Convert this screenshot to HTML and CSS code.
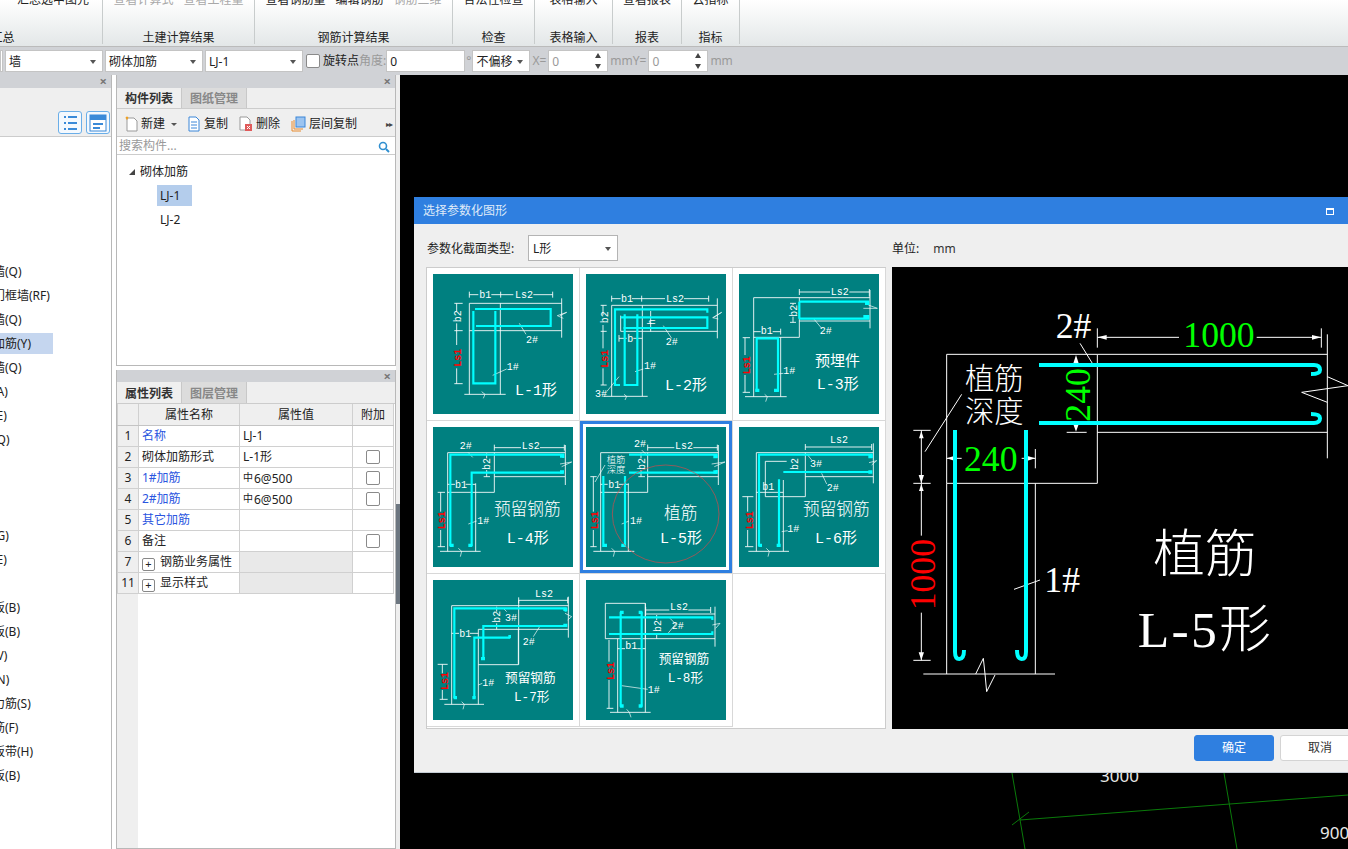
FILE: index.html
```html
<!DOCTYPE html>
<html lang="zh">
<head>
<meta charset="utf-8">
<title>选择参数化图形</title>
<link rel="stylesheet" href="styles.css">
</head>
<body>
<header class="ribbon">
  <div class="rgroup g1"><div class="rbtns"><span class="rb">算</span><span class="rb fill">汇总选中图元</span></div><div class="rlabel">汇总</div></div>
  <div class="rgroup g2"><div class="rbtns"><span class="rb off">查看计算式</span><span class="rb off">查看工程量</span></div><div class="rlabel">土建计算结果</div></div>
  <div class="rgroup g3"><div class="rbtns"><span class="rb">查看钢筋量</span><span class="rb">编辑钢筋</span><span class="rb off">钢筋三维</span></div><div class="rlabel">钢筋计算结果</div></div>
  <div class="rgroup g4"><div class="rbtns"><span class="rb">合法性检查</span></div><div class="rlabel">检查</div></div>
  <div class="rgroup g5"><div class="rbtns"><span class="rb">表格输入</span></div><div class="rlabel">表格输入</div></div>
  <div class="rgroup g6"><div class="rbtns"><span class="rb">查看报表</span></div><div class="rlabel">报表</div></div>
  <div class="rgroup g7"><div class="rbtns"><span class="rb">云指标</span></div><div class="rlabel">指标</div></div>
</header>

<div class="optbar">
  <div class="combo w-stub"></div>
  <div class="combo w-98"><span>墙</span><i class="caret"></i></div>
  <div class="combo w-98"><span>砌体加筋</span><i class="caret"></i></div>
  <div class="combo w-98"><span>LJ-1</span><i class="caret"></i></div>
  <span class="check opt-check"></span>
  <span class="opt-t">旋转点</span>
  <span class="opt-t dim ang">角度:</span>
  <div class="combo w-80"><span>0</span></div>
  <span class="opt-t dim deg">°</span>
  <div class="combo w-58"><span>不偏移</span><i class="caret"></i></div>
  <span class="opt-t dim">X=</span>
  <div class="combo w-60"><span class="dim">0</span><i class="spin"></i></div>
  <span class="opt-t dim">mmY=</span>
  <div class="combo w-60"><span class="dim">0</span><i class="spin"></i></div>
  <span class="opt-t dim">mm</span>
</div>

<main class="workspace">
  <aside class="navpanel">
    <div class="phead"><span class="px">×</span></div>
    <div class="navtabs"></div>
    <div class="navtools">
      <span class="vbtn"><svg viewBox="0 0 24 22" width="24" height="22"><rect x="6" y="4" width="2" height="2" class="ic-b"/><rect x="10" y="4" width="9" height="2" class="ic-b"/><rect x="6" y="10" width="2" height="2" class="ic-b"/><rect x="10" y="10" width="9" height="2" class="ic-b"/><rect x="6" y="16" width="2" height="2" class="ic-b"/><rect x="10" y="16" width="9" height="2" class="ic-b"/></svg></span>
      <span class="vbtn"><svg viewBox="0 0 24 22" width="24" height="22"><rect x="4" y="3" width="16" height="16" class="ic-o"/><rect x="4" y="3" width="16" height="5" class="ic-b"/><rect x="7" y="11" width="10" height="2" class="ic-b"/><rect x="7" y="15" width="7" height="2" class="ic-b"/></svg></span>
    </div>
    <ul class="navlist">
      <li class="sp8"></li>
      <li>剪力墙(Q)</li><li>人防门框墙(RF)</li><li>砌体墙(Q)</li><li class="sel">砌体加筋(Y)</li><li>保温墙(Q)</li><li>暗梁(A)</li><li>墙垛(E)</li><li>幕墙(Q)</li>
      <li></li><li></li><li></li>
      <li>连梁(G)</li><li>圈梁(E)</li>
      <li></li>
      <li>现浇板(B)</li><li>螺旋板(B)</li><li>柱帽(V)</li><li>板洞(N)</li><li>板受力筋(S)</li><li>板负筋(F)</li><li>楼层板带(H)</li><li>后浇板(B)</li>
    </ul>
  </aside>

  <div class="midcol">
    <section class="panel top">
      <div class="phead"><span class="px">×</span></div>
      <div class="tabs"><span class="tab on">构件列表</span><span class="tab">图纸管理</span></div>
      <div class="tools">
        <svg class="tic t1" viewBox="0 0 14 16" width="14" height="16"><path d="M3 2h7l3 3v10H3z" fill="#fff" stroke="#999"/><path d="M2 1l2 2M4 1L2 3" stroke="#f0a020" stroke-width="1.5"/></svg><span>新建</span><i class="mini"></i>
        <svg class="tic t2" viewBox="0 0 14 16" width="14" height="16"><path d="M2 1h7l3 3v11H2z" fill="#fff" stroke="#3a86d8"/><path d="M4 6h6M4 9h6M4 12h6" stroke="#3a86d8"/></svg><span>复制</span>
        <svg class="tic t3" viewBox="0 0 14 16" width="14" height="16"><path d="M1 1h7l3 3v10H1z" fill="#fff" stroke="#999"/><rect x="6" y="8" width="7" height="7" fill="#e05a5a"/><path d="M8 10l3 3M11 10l-3 3" stroke="#fff"/></svg><span>删除</span>
        <svg class="tic t4" viewBox="0 0 15 16" width="15" height="16"><path d="M1 5v10h9M3 4v9h9" fill="none" stroke="#e88b2e"/><rect x="5" y="1" width="9" height="10" fill="#9cc4f0" stroke="#3a86d8"/></svg><span>层间复制</span>
        <span class="more">▸▸</span>
      </div>
      <div class="search"><span>搜索构件...</span><svg viewBox="0 0 12 12" width="12" height="12"><circle cx="5" cy="5" r="3.5" fill="none" stroke="#2f8fd0" stroke-width="1.6"/><path d="M8 8l3 3" stroke="#2f8fd0" stroke-width="2"/></svg></div>
      <div class="tree">
        <div class="troot"><i class="tri"></i>砌体加筋</div>
        <div class="tleaf sel">LJ-1</div>
        <div class="tleaf">LJ-2</div>
      </div>
    </section>
    <section class="panel bottom">
      <div class="phead short"><span class="px">×</span></div>
      <div class="tabs t2row"><span class="tab on">属性列表</span><span class="tab">图层管理</span></div>
      <table class="props">
        <thead><tr><th class="c0"></th><th class="c1">属性名称</th><th class="c2">属性值</th><th class="c3">附加</th></tr></thead>
        <tbody>
          <tr><th>1</th><td class="blue">名称</td><td>LJ-1</td><td></td></tr>
          <tr><th>2</th><td>砌体加筋形式</td><td>L-1形</td><td class="mid"><span class="check"></span></td></tr>
          <tr><th>3</th><td class="blue">1#加筋</td><td><span class="rebar">中</span>6@500</td><td class="mid"><span class="check"></span></td></tr>
          <tr><th>4</th><td class="blue">2#加筋</td><td><span class="rebar">中</span>6@500</td><td class="mid"><span class="check"></span></td></tr>
          <tr><th>5</th><td class="blue">其它加筋</td><td></td><td></td></tr>
          <tr><th>6</th><td>备注</td><td></td><td class="mid"><span class="check"></span></td></tr>
          <tr><th>7</th><td><span class="plus">+</span>钢筋业务属性</td><td class="gray"></td><td></td></tr>
          <tr><th>11</th><td><span class="plus">+</span>显示样式</td><td class="gray"></td><td></td></tr>
        </tbody>
      </table>
    </section>
  </div>
  <div class="splitter"><span class="handle"></span></div>

  <div class="canvas">
    <svg class="cad" viewBox="0 0 948 774" width="948" height="774">
      <path d="M612 698L625 774M824 698L837 774M620 745L948 720M612 750L629 737" class="grid"/>
      <text x="700" y="707" class="cadtxt">3000</text>
      <text x="920" y="764" class="cadtxt">900</text>
    </svg>
  </div>
</main>

<section class="dialog">
  <div class="dtitle"><span>选择参数化图形</span><span class="maxi"></span></div>
  <div class="dbody">
    <div class="dleft">
      <div class="typerow"><span class="typelabel">参数化截面类型:</span><div class="combo dcombo"><span>L形</span><i class="caret"></i></div></div>
      <div class="gallery">
        <div class="cell"><svg class="tile" viewBox="39 237 420 420">
          <path class="w" d="M148 299H175M214 299H280M340 299H398M148 290V308M242 290V308M398 290V308M148 325H425M148 325V598M241 325V598M148 407H425M425 310V428M133 598H257M110 325V350M110 385V450M110 520V566M103 325H128M103 407H128M103 566H128"/>
          <path class="w t" d="M185 590L195 598L190 610M420 362L440 352L412 362L430 370M298 385L318 418M218 541L260 522"/>
          <path class="c" d="M165 342H392V393H168M226 348V565H160V348"/>
          <text x="178" y="308" class="n">b1</text><text x="285" y="308" class="n">Ls2</text>
          <text class="n" transform="translate(122 382) rotate(-90)">b2</text>
          <text class="n red" transform="translate(124 515) rotate(-90)">Ls1</text>
          <text x="318" y="443" class="n">2#</text><text x="260" y="525" class="n">1#</text>
          <text x="285" y="600" class="big">L-1形</text>
        </svg></div>
        <div class="cell"><svg class="tile" viewBox="498 237 420 420">
          <path class="w" d="M575 311H602M636 311H735M792 311H866M575 302V320M665 302V320M866 302V320M575 331H892M575 331V604M667 331V604M602 409H892M602 362V409M892 310V430M550 604H683M549 331V360M549 390V460M549 520V570M542 331H560M542 409H560M542 570H560M597 430H620M640 430H667M597 420V440M692 348V410"/>
          <path class="w t" d="M612 598L620 604L615 615M880 368L905 352L878 368L895 372M730 392L755 430M645 530L670 522M560 590L597 545"/>
          <path class="c" d="M600 570H585V343H862V353M602 367H862V399H610M614 358V570H652V358"/>
          <text x="603" y="320" class="n">b1</text><text x="738" y="320" class="n">Ls2</text><text x="622" y="440" class="n">b</text>
          <text class="n" transform="translate(564 385) rotate(-90)">b2</text><text class="n" transform="translate(706 390) rotate(-90)">h</text>
          <text class="n red" transform="translate(564 518) rotate(-90)">Ls1</text>
          <text x="737" y="451" class="n">2#</text><text x="672" y="523" class="n">1#</text><text x="525" y="607" class="n">3#</text>
          <text x="735" y="585" class="big">L-2形</text>
        </svg></div>
        <div class="cell"><svg class="tile" viewBox="957 237 420 420">
          <path class="w" d="M1138 291H1230M1288 291H1348M1138 282V300M1348 282V305M1001 308H1350M1001 308V605M1138 308V427H1001M1138 378H1350M1350 285V400M1082 427V605M975 605H1100M1001 410H1022M1058 410H1082M1082 401V419M1119 325V330M1119 365V382M1110 325H1128M1110 382H1128M975 428V480M975 540V592M968 428H990M968 592H990"/>
          <path class="w t" d="M1034 598L1042 605L1037 620M1330 340L1372 340L1345 330M1180 370L1205 400M1062 538L1090 535"/>
          <path class="c" d="M1138 320H1345V330M1138 371H1345V360M1138 320V371M1010 590V430H1074V590"/>
          <path class="cb" d="M1006 586H1018M1062 586H1076M1335 325H1346M1330 365H1346"/>
          <text x="1022" y="418" class="n">b1</text><text x="1232" y="300" class="n">Ls2</text>
          <text class="n" transform="translate(1130 365) rotate(-90)">b2</text>
          <text class="n red" transform="translate(990 538) rotate(-90)">Ls1</text>
          <text x="1199" y="418" class="n">2#</text><text x="1090" y="538" class="n">1#</text>
          <text x="1185" y="512" class="big">预埋件</text><text x="1190" y="582" class="big">L-3形</text>
        </svg></div>
        <div class="cell"><svg class="tile" viewBox="24 21 420 420">
          <path class="w" d="M208 83H288M345 83H418M208 74V92M418 74V92M68 98H420M68 98V394M208 98V217H68M208 170H420M152 190V394M421 75V195M45 394H167M47 217V275M47 330V380M38 217H60M38 380H60M68 193H90M122 193H152M185 100V115M185 150V170M176 170H195"/>
          <path class="w t" d="M100 385L110 394L106 410M405 132L440 126L410 140M130 312L155 303M130 98L143 112"/>
          <path class="c" d="M76 378V104H415V114M140 378V158H415"/>
          <path class="cb" d="M74 376H86M130 376H142M405 108H417M405 156H417"/>
          <text x="104" y="88" class="n">2#</text><text x="290" y="88" class="n">Ls2</text><text x="90" y="203" class="n">b1</text>
          <text class="n" transform="translate(196 150) rotate(-90)">b2</text>
          <text class="n red" transform="translate(60 328) rotate(-90)">Ls1</text>
          <text x="157" y="312" class="n">1#</text>
          <text x="207" y="285" class="big cn">预留钢筋</text><text x="245" y="368" class="big">L-4形</text>
        </svg></div>
        <div class="cell chosen"><svg class="tile" viewBox="483 21 420 420">
          <path class="w" d="M668 83H748M805 83H877M668 74V92M877 74V92M527 98H880M527 98V394M668 98V217H527M668 170H880M610 190V394M880 75V195M505 394H628M505 170V275M505 330V380M496 170H515M496 380H515M527 193H548M582 193H610M648 100V115M648 150V170M640 170H660"/>
          <path class="w t" d="M560 385L569 394L565 410M860 132L900 126L868 140M590 312L612 303M650 90L668 108M540 135L510 186"/>
          <path class="c" d="M612 104H875V114M612 158H875V150M535 168V378H545M600 168V378H590"/>
          <path class="cb" d="M535 376H546M589 376H600M865 110H877M865 156H877"/>
          <ellipse cx="722" cy="282" rx="160" ry="147" class="ring"/>
          <text x="627" y="82" class="n">2#</text><text x="750" y="88" class="n">Ls2</text><text x="550" y="203" class="n">b1</text>
          <text class="n" transform="translate(660 150) rotate(-90)">b2</text>
          <text class="n red" transform="translate(519 328) rotate(-90)">Ls1</text>
          <text x="615" y="312" class="n">1#</text>
          <text x="545" y="130" class="sm">植筋</text><text x="545" y="160" class="sm">深度</text>
          <text x="717" y="297" class="big cn">植筋</text><text x="705" y="368" class="big">L-5形</text>
        </svg></div>
        <div class="cell"><svg class="tile" viewBox="942 21 420 420">
          <path class="w" d="M1141 81H1340M1141 72V90M1340 72V90M994 98H1345M994 98V394M1141 98V230H1021V124H1085M1141 170H1345M994 217H1075M1075 180V394M1345 70V190M970 394H1092M968 230V275M968 330V380M952 230H985M960 380H985"/>
          <path class="w t" d="M1024 385L1033 394L1029 410M1332 128L1355 122L1340 135M1148 105L1160 120M1190 160L1205 192M1070 335L1088 332"/>
          <path class="c" d="M1002 378V104H1340V114M1075 156H1340M1062 178V378"/>
          <path class="cb" d="M1000 376H1011M1055 376H1067M1330 110H1342M1330 156H1342"/>
          <text x="1215" y="70" class="n">Ls2</text><text x="1012" y="209" class="n">b1</text>
          <text class="n" transform="translate(1118 150) rotate(-90)">b2</text>
          <text class="n red" transform="translate(984 328) rotate(-90)">Ls1</text>
          <text x="1155" y="141" class="n">3#</text><text x="1205" y="214" class="n">2#</text><text x="1087" y="337" class="n">1#</text>
          <text x="1134" y="285" class="big cn">预留钢筋</text><text x="1170" y="368" class="big">L-6形</text>
        </svg></div>
        <div class="cell"><svg class="tile" viewBox="24 480 420 420">
          <path class="w" d="M281 541H428M281 532V550M428 532V550M80 557H430M80 557V853M430 530V653M160 628H280V734H160M160 628V853M281 541V734M280 628H430M58 853H177M52 733V760M52 810V838M38 733H68M44 838H68M80 640H102M135 640H160M215 560V575M215 610V628"/>
          <path class="w t" d="M110 845L118 853L114 868M420 580L440 590L428 600M160 795L172 790M235 565L245 575M345 618L325 650"/>
          <path class="c" d="M88 835V565H422V575M175 718V618H425M148 835V653H255"/>
          <path class="cb" d="M86 833H96M142 833H152M415 568H427M415 616H427M168 716H180M250 650H258"/>
          <text x="330" y="532" class="n">Ls2</text><text x="103" y="650" class="n">b1</text>
          <text class="n" transform="translate(224 608) rotate(-90)">b2</text>
          <text class="n red" transform="translate(70 810) rotate(-90)">Ls1</text>
          <text x="240" y="602" class="n">3#</text><text x="293" y="674" class="n">2#</text><text x="172" y="797" class="n">1#</text>
          <text x="240" y="785" class="mid-t">预留钢筋</text><text x="267" y="843" class="mid-t">L-7形</text>
        </svg></div>
        <div class="cell"><svg class="tile" viewBox="483 480 420 420">
          <path class="w" d="M662 570H733M790 570H857M662 561V579M857 561V579M541 550H661V656H541ZM662 582H870M661 656H870M870 560V680M578 656V877M661 550V877M555 877H677M552 660V725M552 780V865M545 865H565M578 686H600M637 686H661M695 585V600M695 640V656"/>
          <path class="w t" d="M605 868L613 877L618 892M862 615L885 610L872 625M590 797L668 808M735 595L752 612L725 645"/>
          <path class="c" d="M552 592H862V600M552 642H862V634M587 575V860M650 575V860"/>
          <path class="cb" d="M585 577H596M652 577H641M585 858H596M652 858H641"/>
          <text x="735" y="570" class="n">Ls2</text><text x="601" y="686" class="n">b1</text>
          <text class="n" transform="translate(708 636) rotate(-90)">b2</text>
          <text class="n red" transform="translate(568 780) rotate(-90)">Ls1</text>
          <text x="740" y="626" class="n">2#</text><text x="668" y="820" class="n">1#</text>
          <text x="701" y="728" class="mid-t">预留钢筋</text><text x="728" y="785" class="mid-t">L-8形</text>
        </svg></div>
        <div class="cell blank"></div>
      </div>
    </div>
    <div class="dright">
      <div class="unitrow"><span>单位:</span><span class="unit">mm</span></div>
      <div class="preview"><svg class="pv" viewBox="6 216 1368 1386" width="456" height="462">
        <path class="pw" d="M170 478H622V865H170ZM622 478H1312M622 712H1312M1312 418V790M622 400V458M1294 400V458M622 427H867M1100 427H1294M530 712H590M94 706V865M70 706H122M70 865H122M94 865V1022M94 1253V1396M70 1396H122M170 865V1437M436 865V1437M100 1437H495M170 790H215M395 790H436M436 762V820"/>
        <path class="pw" d="M1312 545L1374 572L1235 592L1312 622M570 445L607 505M215 598L105 770M257 1437L280 1390L285 1437L290 1490L315 1440M372 1183L450 1155"/>
        <path class="pa" d="M558 480L550 505H566ZM558 710L550 688H566ZM622 427L650 420V434ZM1294 427L1266 420V434ZM170 790L195 782V798ZM436 790L410 782V798ZM94 708L87 730H101ZM94 865L86 840H102ZM94 867L87 888H101ZM94 1396L86 1372H102Z"/>
        <path class="pc" d="M447 510H1272Q1290 510 1290 525Q1290 537 1263 537M447 684H1272Q1290 684 1290 670Q1290 657 1263 657M195 705V1370Q195 1392 208 1392Q222 1392 222 1365M408 705V1370Q408 1392 395 1392Q381 1392 381 1365"/>
        <text x="880" y="456" class="pn green">1000</text>
        <text x="497" y="428" class="pn">2#</text>
        <text x="222" y="829" class="pn green">240</text>
        <text class="pn green" transform="translate(600 680) rotate(-90)">240</text>
        <text class="pn red" transform="translate(134 1246) rotate(-90)">1000</text>
        <text x="463" y="1190" class="pn">1#</text>
        <text x="225" y="582" class="pcn">植筋</text><text x="225" y="682" class="pcn">深度</text>
        <text x="790" y="1130" class="pbig">植筋</text>
        <text x="743" y="1355" class="pbig wide">L-5形</text>
      </svg></div>
    </div>
  </div>
  <div class="dfoot"><button class="btn primary">确定</button><button class="btn">取消</button></div>
</section>
</body>
</html>
```
FILE: styles.css
```css
* { box-sizing: border-box; }
html, body { margin: 0; height: 100%; overflow: hidden; }
body { width: 1348px; height: 849px; position: relative; background: #fff; color: #222;
  font: 12px/1.2 "Noto Sans", "Noto Sans CJK SC", sans-serif; }

/* ribbon */
.ribbon { display: flex; height: 47px; background: linear-gradient(#fff, #e3e7e8); border-bottom: 1px solid #bbb; }
.rgroup { flex: none; height: 44px; border-right: 1px solid #c8cccc; overflow: hidden; }
.g1 { width: 200px; margin-left: -97px; }
.g2 { width: 152px; }
.g3 { width: 198px; }
.g4 { width: 82px; }
.g5 { width: 78px; }
.g6 { width: 69px; }
.g7 { width: 58px; }
.rbtns { display: flex; justify-content: center; gap: 10px; height: 8px; align-items: flex-end; white-space: nowrap; line-height: 16px; }
.rb { flex: none; height: 16px; }
.rb.off { color: #a9a9a9; }
.g1 .rbtns { justify-content: flex-end; padding-right: 13px; }
.rb.fill { margin-left: 10px; }
.rlabel { margin-top: 22px; text-align: center; line-height: 15px; }

/* options bar */
.optbar { display: flex; align-items: center; gap: 2px; height: 28px; background: #d0d2d6; padding: 3px 0; white-space: nowrap; }
.combo { position: relative; flex: none; height: 22px; background: #fff; border: 1px solid #c4c4c4; padding: 0 3px; line-height: 21px; }
.w-stub { width: 3px; padding: 0; }
.w-98 { width: 98px; }
.w-80 { width: 79px; }
.w-58 { width: 58px; }
.w-60 { width: 60px; }
.caret { position: absolute; right: 6px; top: 9px; border: 3px solid transparent; border-top: 4px solid #555; border-bottom: 0; }
.spin { position: absolute; right: 5px; top: 2px; width: 7px; height: 16px; }
.spin::before, .spin::after { content: ""; position: absolute; left: 0; border: 3.5px solid transparent; }
.spin::before { top: 0; border-top: 0; border-bottom: 5px solid #444; }
.spin::after { bottom: 0; border-bottom: 0; border-top: 5px solid #444; }
.check { display: inline-block; width: 14px; height: 14px; background: #fff; border: 1px solid #8a8a8a; border-radius: 2px; }
.opt-check { margin: 0 1px; }
.opt-t { flex: none; padding-top: 1px; }
.dim { color: #9a9a9a; }
.ang { margin: 0 -2px; }
.deg { margin: 0 -1px 0 -1px; }

/* workspace */
.workspace { display: flex; height: 774px; }
.navpanel { flex: none; width: 112px; margin-right: 4px; border-right: 1px solid #b8b8b8; overflow: hidden; background: #fff; }
.phead { position: relative; height: 13px; background: #d0d2d6; }
.phead.short { height: 12px; }
.px { position: absolute; right: 4px; top: -1px; font-size: 13px; line-height: 14px; color: #777; font-weight: 700; }
.navtabs { height: 20px; background: #efefef; }
.navtools { display: flex; justify-content: flex-end; gap: 4px; height: 29px; padding: 3px 1px 0 0; background: #efefef; border-bottom: 1px solid #ccc; }
.vbtn { width: 24px; height: 23px; border: 1px solid #6aaee8; border-radius: 3px; background: #f4f9fe; display: flex; align-items: center; justify-content: center; overflow: hidden; }
.vbtn svg { flex: none; }
.ic-b { fill: #3a8ad8; }
.ic-o { fill: #fff; stroke: #3a8ad8; }
.navlist { margin: 0; padding: 0; list-style: none; }
.navlist li { height: 24px; line-height: 24px; white-space: nowrap; text-indent: -31px; }
.navlist li.sp8 { height: 123px; }
.navlist li.sel { background: #c5d6ef; width: 53px; height: 21px; line-height: 22px; margin: 1px 0 2px; }

.midcol { flex: none; width: 280px; display: flex; flex-direction: column; gap: 4px; }
.panel { border: 1px solid #b8b8b8; border-top: 0; background: #fff; overflow: hidden; }
.panel.top { height: 291px; }
.panel.bottom { flex: 1; background: linear-gradient(90deg, #efefef 21px, #fff 21px); }
.tabs { display: flex; height: 21px; background: #efefef; border-bottom: 1px solid #ccc; }
.t2row { height: 22px; }
.tab { width: 65px; line-height: 22px; text-align: center; background: #dcdcdc; color: #888; font-weight: 700; border-right: 1px solid #c8c8c8; }
.t2row .tab { line-height: 24px; }
.tab.on { background: #efefef; color: #333; }
.tools { display: flex; align-items: center; height: 28px; background: #efefef; border-bottom: 1px solid #ccc; padding: 3px 0 0 7px; white-space: nowrap; }
.tic { flex: none; margin-right: 3px; }
.t2 { margin-left: 10px; }
.t3 { margin-left: 11px; }
.t4 { margin-left: 11px; }
.mini { border: 3px solid transparent; border-top: 3px solid #555; border-bottom: 0; margin-left: 6px; }
.more { margin-left: auto; margin-right: 3px; font-size: 8px; color: #444; letter-spacing: -1px; }
.search { display: flex; align-items: center; justify-content: space-between; height: 18px; padding: 2px 5px 0 2px; border-bottom: 1px solid #ccc; color: #999; }
.tree { padding-top: 8px; }
.troot { height: 17px; line-height: 17px; padding-left: 23px; position: relative; }
.tri { position: absolute; left: 12px; top: 6px; border-left: 6px solid transparent; border-bottom: 6px solid #444; }
.tleaf { width: 35px; margin: 0 0 3px 40px; height: 21px; line-height: 21px; padding-left: 3px; }
.tleaf.sel { background: #b4cdec; margin-top: 5px; }

.props { width: 276px; border-collapse: collapse; table-layout: fixed; }
.props th, .props td { height: 21px; padding: 2px 3px 0; border: 1px solid #d0d0d0; border-top: 0; font-weight: 400; white-space: nowrap; overflow: hidden; }
.props thead th { background: #efefef; border-bottom: 1px solid #c4c4c4; text-align: center; }
.props tbody th { background: #efefef; text-align: center; }
.c0 { width: 21px; }
.c1 { width: 101px; }
.c2 { width: 113px; }
.c3 { width: 41px; }
.props .blue { color: #2a55e0; }
.props .gray { background: #e9e9e9; }
.props .mid { text-align: center; padding: 0; line-height: 0; }
.rebar { font-size: 10px; vertical-align: 2px; margin-right: 1px; }
.plus { display: inline-block; width: 13px; height: 13px; margin: 0 5px 0 0; border: 1px solid #888; border-radius: 2px; font-size: 11px; line-height: 10px; text-align: center; vertical-align: -2px; }

.splitter { flex: none; width: 4px; background: #eee; padding-top: 429px; }
.handle { display: block; height: 100px; background: #6c7680; }
.canvas { flex: 1; background: #000; position: relative; overflow: hidden; }
.cad { display: block; }
.grid { stroke: #0a7a0a; stroke-width: 1; fill: none; }
.cadtxt { fill: #e8e8e8; font: 17px "Noto Sans", sans-serif; }

/* dialog */
.dialog { position: absolute; left: 414px; top: 197px; width: 958px; height: 576px; background: #efefef; border-bottom: 1px solid #c4ccd4; }
.dtitle { display: flex; align-items: center; justify-content: space-between; height: 27px; padding: 1px 38px 0 9px; background: #2f7fe0; color: #dfeaf8; }
.maxi { width: 8px; height: 7px; border: 1px solid #fff; border-top-width: 2px; }
.dbody { display: flex; gap: 6px; padding: 11px 12px 0; }
.dleft { flex: none; width: 460px; }
.typerow { display: flex; align-items: center; height: 26px; margin-bottom: 6px; }
.typelabel { flex: none; width: 102px; padding: 2px 0 0 1px; }
.dcombo { width: 90px; height: 26px; line-height: 25px; padding-left: 4px; border-color: #b4b4b4; }
.dcombo .caret { top: 11px; }
.gallery { display: grid; grid-template-columns: repeat(3, 153px); grid-auto-rows: 153px; align-content: start; height: 462px; background: #fff; border: 1px solid #ccc; }
.cell { padding: 6px; border-right: 1px solid #d8d8d8; border-bottom: 1px solid #d8d8d8; }
.cell.chosen { box-shadow: inset 0 0 0 3px #2f7fe0; }
.cell.blank { border: 0; }
.tile { display: block; width: 140px; height: 140px; background: #008080; }
.w { fill: none; stroke: #fff; stroke-width: 2.6; }
.w.t { stroke-width: 2; }
.c { fill: none; stroke: #00ffff; stroke-width: 6.5; }
.cb { fill: none; stroke: #00ffff; stroke-width: 10; }
.ring { fill: none; stroke: #d84848; stroke-width: 2; }
.n { fill: #fff; font: 30px "Liberation Mono", monospace; }
.n.red { fill: #ff0000; font-weight: 700; }
.big { fill: #fff; font: 45px "Liberation Mono", "Noto Sans CJK SC", monospace; }
.big.cn { font-size: 50px; font-family: "Noto Sans CJK SC", sans-serif; font-weight: 300; }
.mid-t { fill: #fff; font: 38px "Liberation Mono", "Noto Sans CJK SC", monospace; }
.sm { fill: #fff; font: 28px "Noto Sans CJK SC", sans-serif; font-weight: 300; }

.dright { flex: 1; min-width: 0; }
.unitrow { display: flex; gap: 14px; align-items: center; height: 26px; margin-bottom: 6px; padding-top: 2px; }
.unit { color: #333; }
.preview { height: 462px; background: #000; }
.pv { display: block; }
.pw { fill: none; stroke: #fff; stroke-width: 3; }
.pa { fill: #fff; }
.pc { fill: none; stroke: #00ffff; stroke-width: 12; }
.pn { fill: #fff; font: 107px "Liberation Serif", serif; }
.pn.green { fill: #00ff00; }
.pn.red { fill: #ff0000; }
.pcn { fill: #fff; font: 88px "Noto Sans CJK SC", sans-serif; font-weight: 300; }
.pbig { fill: #fff; font: 155px "Liberation Serif", "Noto Sans CJK SC", serif; font-weight: 300; }
.pbig.wide { letter-spacing: 7px; }

.dfoot { display: flex; justify-content: flex-end; gap: 6px; padding: 6px 12px 0; }
.btn { width: 80px; height: 26px; padding: 1px 0 0; font: inherit; color: #333; background: #fff; border: 1px solid #d4d4d4; border-radius: 3px; }
.btn.primary { color: #fff; background: #2f7fe0; border-color: #2f7fe0; }
```
